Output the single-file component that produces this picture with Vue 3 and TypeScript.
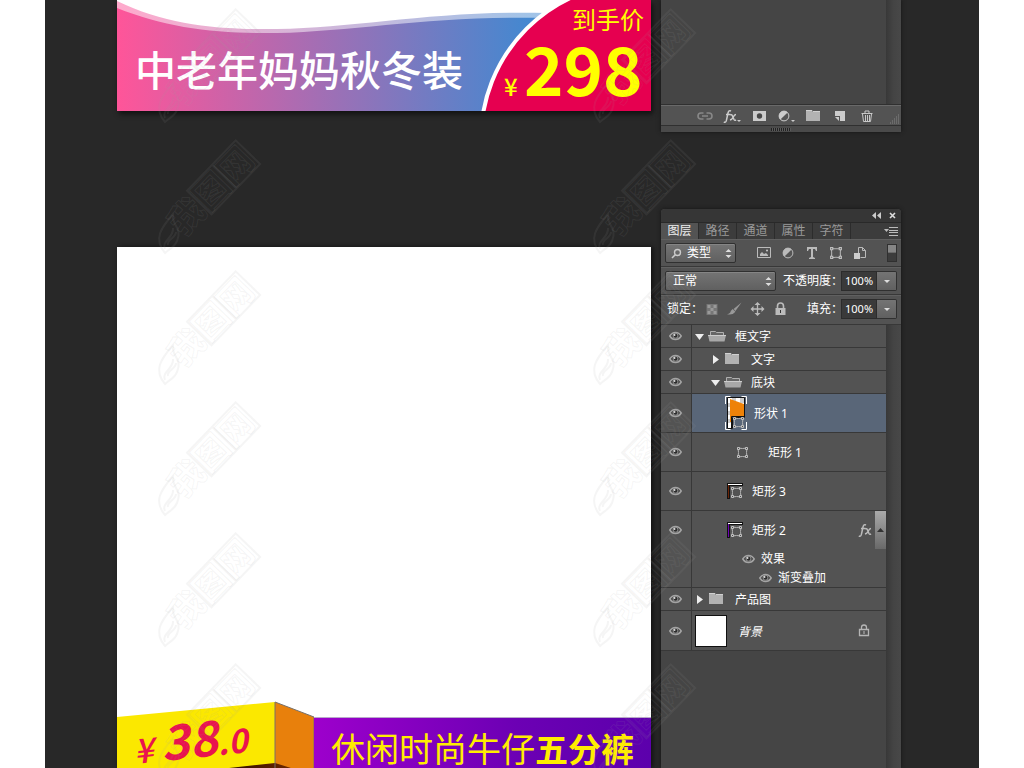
<script setup lang="ts">
import { ref } from 'vue'

type Kind = 'open' | 'closed' | 'shape' | 'rect' | 'thumb' | 'background'

interface Layer {
  id: number
  name: string
  kind: Kind
  level: number
  accent?: string
  effects?: string[]
}

const layers: Layer[] = [
  { id: 1, name: '框文字', kind: 'open', level: 1 },
  { id: 2, name: '文字', kind: 'closed', level: 2 },
  { id: 3, name: '底块', kind: 'open', level: 2 },
  { id: 4, name: '形状 1', kind: 'shape', level: 3 },
  { id: 5, name: '矩形 1', kind: 'rect', level: 3 },
  { id: 6, name: '矩形 3', kind: 'thumb', level: 3, accent: '#6b2407' },
  { id: 7, name: '矩形 2', kind: 'thumb', level: 3, accent: '#6d00b4', effects: ['渐变叠加'] },
  { id: 8, name: '产品图', kind: 'closed', level: 1 },
  { id: 9, name: '背景', kind: 'background', level: 1 },
]

const tabs = ['图层', '路径', '通道', '属性', '字符']
const activeTab = ref('图层')
const selected = ref(4)
const filterKind = ref('类型')
const blendMode = ref('正常')
const opacity = ref('100%')
const fill = ref('100%')

const footerTools = [
  { icon: 'link', label: '链接图层' },
  { icon: 'fx', label: '图层样式' },
  { icon: 'mask', label: '添加蒙版' },
  { icon: 'adjust-menu', label: '调整图层' },
  { icon: 'folder', label: '新建组' },
  { icon: 'new', label: '新建图层' },
  { icon: 'trash', label: '删除图层' },
]
const filterTools = [
  { icon: 'image', label: '像素图层' },
  { icon: 'adjust', label: '调整图层' },
  { icon: 'type', label: '文字图层' },
  { icon: 'path', label: '形状图层' },
  { icon: 'smart', label: '智能对象' },
]
const lockTools = [
  { icon: 'checker', label: '锁定透明像素' },
  { icon: 'brush', label: '锁定图像像素' },
  { icon: 'move', label: '锁定位置' },
  { icon: 'lock', label: '锁定全部' },
]
const marks = [0, 1, 2, 3, 4, 5, 6, 7, 8, 9, 10, 11]
</script>

<template>
  <div class="page">
    <svg class="defs" width="0" height="0" aria-hidden="true">
      <symbol id="eye" viewBox="0 0 13 10">
        <path d="M.8 5C2.500 2.200 4.300 1.500 6.500 1.500s4 .7 5.700 3.500C10.500 7.800 8.500 8.500 6.500 8.500S2.500 7.800 .8 5Z" fill="#444" stroke="#a4a4a4" stroke-width="1.500" />
        <circle cx="6.500" cy="4.800" r="2.800" fill="#999" /><circle cx="6.500" cy="4.800" r="2" fill="#2c2c2c" /><circle cx="5.500" cy="4" r="1" fill="#ddd" />
      </symbol>
      <symbol id="folder" viewBox="0 0 16 14"><path d="M1 2h6l1 1h7v9H1Z" fill="#b2b2b2" /><path d="M1 1.500h6l1 1h7" fill="none" stroke="#d0d0d0" /></symbol>
      <symbol id="folder-open" viewBox="0 0 18 14"><path d="M2.500 6V2.500h5l1 1h7V6" fill="#666" stroke="#b0b0b0" /><path d="M0 6h18l-1.500 6.500H1.500Z" fill="#a8a8a8" /><path d="M0 6.500h18" stroke="#ccc" /></symbol>
      <symbol id="path" viewBox="0 0 13 13">
        <path d="M2 2q4.500 1 9 0q-1 4.500 0 9q-4.500-1-9 0q1-4.500 0-9Z" fill="none" stroke="#b5b5b5" />
        <path d="M1.500 1.500h2v2h-2ZM9.500 1.500h2v2h-2ZM1.500 9.500h2v2h-2ZM9.500 9.500h2v2h-2Z" fill="#505050" stroke="#c0c0c0" />
      </symbol>
      <symbol id="image" viewBox="0 0 14 14"><path d="M.5 1.500h13v10H.5Z" fill="none" stroke="#bbb" /><path d="M3 10V8l2-2 2 2 2-1 2 2v1Z" fill="#bbb" /><circle cx="10" cy="4.500" r="1" fill="#ccc" /></symbol>
      <symbol id="adjust" viewBox="0 0 14 14"><circle cx="7" cy="7" r="4.900" fill="#555" stroke="#bbb" /><path d="M10.600 3.400A5 5 0 1 0 3.400 10.600Z" fill="#bbb" /></symbol>
      <symbol id="adjust-menu" viewBox="0 0 18 14"><circle cx="7" cy="7" r="4.900" fill="#555" stroke="#ccc" /><path d="M10.600 3.400A5 5 0 1 0 3.400 10.600Z" fill="#ccc" /><path d="M14 11h4l-2 2Z" fill="#ccc" /></symbol>
      <symbol id="type" viewBox="0 0 14 14"><path d="M2 1h10v4h-1l-1-2H8v8l2 1v1H4v-1l2-1V3H4L3 5H2Z" fill="#bbb" /></symbol>
      <symbol id="smart" viewBox="0 0 14 14"><path d="M5.500 7V1.500h4l3 3v7h-5M9.500 1.500v3h3" fill="none" stroke="#bbb" /><path d="M1 7h6v6H1Z" fill="#ccc" /></symbol>
      <symbol id="checker" viewBox="0 0 14 14"><path d="M2 2h11v11H2Z" fill="#777" /><path d="M3 3h3v3H3ZM9 3h3v3H9ZM6 6h3v3H6ZM3 9h3v3H3ZM9 9h3v3H9Z" fill="#999" /></symbol>
      <symbol id="brush" viewBox="0 0 16 14"><path d="M15.500 0 7 7l2 2ZM6 7 9 10Q6 14 0 12.500 4 11.500 4 9Z" fill="#999" /></symbol>
      <symbol id="move" viewBox="0 0 14 14"><path d="M7 2v10M2 7h10" stroke="#bbb" stroke-width="1.300" /><path d="m7 0 3 3H4ZM7 14l3-3H4ZM0 7l3-3v6ZM14 7l-3-3v6Z" fill="#bbb" /></symbol>
      <symbol id="lock" viewBox="0 0 14 14"><path d="M4 6V4a3 3 0 0 1 6 0v2" fill="none" stroke="#bbb" stroke-width="1.600" /><path d="M2 6h10v7H2Z" fill="#bbb" /><path d="M6.500 8h1v3h-1Z" fill="#333" /></symbol>
      <symbol id="lock-line" viewBox="0 0 12 13"><path d="M3.500 5V3.500a2.500 2.500 0 0 1 5 0V5M1.500 5.500h9v6h-9Z" fill="none" stroke="#b5b5b5" stroke-width="1.300" /><path d="M5.500 7h1v3h-1Z" fill="#bbb" /></symbol>
      <symbol id="link" viewBox="0 0 16 14"><path d="M6.500 4H4a3 3 0 0 0 0 6h2.500M9.500 4H12a3 3 0 0 1 0 6H9.500M5 7h6" fill="none" stroke="#888" stroke-width="1.600" /></symbol>
      <symbol id="fx" viewBox="0 0 18 14"><path d="M8 2Q5.800.8 5 4L3.500 11Q3 14 .8 13M3 5.500h4.500M7.500 6q1.500-.8 2 1L11 10.500q.6 1.300 2 .3M13 5.500Q11.500 5.500 10.300 8T7 11" fill="none" stroke="#ccc" stroke-width="1.500" /><path d="M14 11h4l-2 2Z" fill="#ccc" /></symbol>
      <symbol id="fx-only" viewBox="0 0 14 14"><path d="M8 2Q5.800.8 5 4L3.500 11Q3 14 .8 13M3 5.500h4.500M7.500 6q1.500-.8 2 1L11 10.500q.6 1.300 2 .3M13 5.500Q11.500 5.500 10.300 8T7 11" fill="none" stroke="#bbb" stroke-width="1.500" /></symbol>
      <symbol id="mask" viewBox="0 0 14 14"><path d="M1 2h13v10H1Z" fill="#ccc" /><circle cx="7.500" cy="7" r="2.700" fill="#484848" /></symbol>
      <symbol id="new" viewBox="0 0 14 14"><path d="M2 2h10v10H7V7H2Z" fill="#ccc" /><path d="M2 8h4v4Z" fill="#ccc" /></symbol>
      <symbol id="trash" viewBox="0 0 14 14"><path d="M1.500 4.500h11M5 4V2h4v2M2.500 5l1 7.500h7l1-7.500M5.500 6v6M7.500 6v6M9.500 6v6" fill="none" stroke="#c8c8c8" /></symbol>
      <symbol id="updown" viewBox="0 0 7 11"><path d="m3.500 1 3 3h-6ZM3.500 10l3-3h-6Z" fill="#ddd" /></symbol>
    </svg>

    <main class="workspace">
      <section class="boards">
        <svg class="banner" viewBox="0 0 534 111" role="img" aria-label="中老年妈妈秋冬装 到手价 ¥298">
          <defs>
            <linearGradient id="pinkblue"><stop offset="0" stop-color="#ff5599" /><stop offset=".77" stop-color="#4488d0" /></linearGradient>
          </defs>
          <path d="M0 0H534V111H0Z" fill="#fff" />
          <path d="M0 1C50 25 100 30 160 29C240 28 320 10 430 13H534V111H0Z" fill="url(#pinkblue)" opacity=".5" />
          <path d="M0 8C50 28 100 34 160 33C240 31 320 15 430 18H534V111H0Z" fill="url(#pinkblue)" />
          <circle cx="520" cy="139" r="156" fill="#e60050" stroke="#fff" stroke-width="4" />
          <text x="18" y="86" font-size="41" font-weight="500" fill="#fff">中老年妈妈秋冬装</text>
          <g fill="#ffff00">
            <text x="455" y="29" font-size="24">到手价</text>
            <text x="387" y="96" font-size="24" font-weight="500">¥</text>
            <text x="407" y="96" font-size="67" font-weight="700">298</text>
          </g>
        </svg>
        <div class="canvas">
          <svg class="strip" viewBox="0 0 534 71" role="img" aria-label="¥38.0 休闲时尚牛仔五分裤">
            <defs>
              <linearGradient id="violet"><stop offset="0" stop-color="#9d00cc" /><stop offset=".6" stop-color="#6c00b4" /><stop offset="1" stop-color="#5c00ac" /></linearGradient>
              <linearGradient id="brown"><stop offset="0" stop-color="#260800" /><stop offset="1" stop-color="#702800" /></linearGradient>
            </defs>
            <path d="M105 71 158 65 176 71Z" fill="url(#brown)" />
            <path d="M0 20 158 5V66L112 71H0Z" fill="#fbe800" />
            <path d="M158 5 197 20V71H174L158 66Z" fill="#e8800c" />
            <path d="M158 71V5l39 15v51" fill="none" stroke="#77706a" />
            <path d="M197 21H534V71H197Z" fill="url(#violet)" />
            <path d="M197 20.500H534" stroke="#b9a9ca" />
            <g fill="#e9134e" font-weight="700" font-style="italic" transform="translate(18 67) rotate(-6)">
              <text x="0" y="0" font-size="34" font-weight="500">¥</text>
              <text x="28" y="0" font-size="48">38</text>
              <text x="84" y="0" font-size="33">.0</text>
            </g>
            <text x="214" y="65" font-size="34" fill="#ffed00">休闲时尚牛仔<tspan font-size="33" font-weight="700">五分裤</tspan></text>
          </svg>
        </div>
      </section>

      <aside class="panels">
        <section class="panel upper">
          <div class="upper-body"><div class="gutter"></div></div>
          <div class="footer">
            <button v-for="t in footerTools" :key="t.icon" type="button" class="tool" :aria-label="t.label">
              <svg class="wide"><use :href="'#' + t.icon" /></svg>
            </button>
            <svg class="resize" viewBox="0 0 12 12"><path d="M9 2h2M7 4h4M5 6h6M3 8h8M1 10h10" stroke="#858585" stroke-dasharray="1 1" /></svg>
          </div>
          <div class="grip"><span></span></div>
        </section>

        <section class="panel layers-panel">
          <header class="titlebar">
            <button type="button" class="mini" aria-label="折叠"><svg viewBox="0 0 9 7"><path d="M4 0v7L0 3.500ZM9 0v7L5 3.500Z" fill="#ccc" /></svg></button>
            <button type="button" class="mini" aria-label="关闭"><svg viewBox="0 0 9 7"><path d="m2 1 5 5M7 1 2 6" stroke="#ddd" stroke-width="1.600" /></svg></button>
          </header>
          <nav class="tabs">
            <button v-for="t in tabs" :key="t" type="button" :class="{ active: activeTab === t }" @click="activeTab = t">{{ t }}</button>
            <button type="button" class="menu" aria-label="面板菜单"><svg viewBox="0 0 14 9"><path d="M0 2h5L2.500 5Z" fill="#bbb" /><path d="M5 .5h9M5 3.500h9M5 5.500h9M5 8.500h9" stroke="#bbb" /></svg></button>
          </nav>

          <div class="bar filter">
            <label class="picker kind">
              <svg class="search" viewBox="0 0 11 11"><circle cx="6.500" cy="4.500" r="3" fill="none" stroke="#ccc" stroke-width="1.400" /><path d="m4 7-3 3" stroke="#ccc" stroke-width="1.600" /></svg>
              <select v-model="filterKind" aria-label="筛选"><option>类型</option><option>名称</option></select>
              <svg class="updown"><use href="#updown" /></svg>
            </label>
            <div class="icons">
              <button v-for="t in filterTools" :key="t.icon" type="button" class="tool" :aria-label="t.label"><svg><use :href="'#' + t.icon" /></svg></button>
            </div>
            <button type="button" class="switch" aria-label="打开或关闭筛选"></button>
          </div>

          <div class="bar">
            <label class="picker blend">
              <select v-model="blendMode" aria-label="混合模式"><option>正常</option><option>正片叠底</option></select>
              <svg class="updown"><use href="#updown" /></svg>
            </label>
            <div class="amount">
              <label for="opacity">不透明度：</label>
              <input id="opacity" v-model="opacity" type="text" /><button type="button" aria-label="调整不透明度"></button>
            </div>
          </div>

          <div class="bar last">
            <span>锁定：</span>
            <div class="icons locks">
              <button v-for="t in lockTools" :key="t.icon" type="button" class="tool" :aria-label="t.label"><svg><use :href="'#' + t.icon" /></svg></button>
            </div>
            <div class="amount">
              <label for="fill">填充：</label>
              <input id="fill" v-model="fill" type="text" /><button type="button" aria-label="调整填充"></button>
            </div>
          </div>

          <div class="list-area">
            <ul class="layers">
              <li v-for="l in layers" :key="l.id" :class="[l.kind, 'level' + l.level, { selected: selected === l.id, expanded: l.effects }]" @click="selected = l.id">
                <button type="button" class="eye" aria-label="切换可见性"><svg><use href="#eye" /></svg></button>
                <div class="detail">
                  <div class="line">
                    <template v-if="l.kind === 'open' || l.kind === 'closed'">
                      <button type="button" class="twist" aria-label="展开或折叠">
                        <svg viewBox="0 0 9 9"><path :d="l.kind === 'open' ? 'M0 2h9L4.500 8Z' : 'M2 0v9l6-4.500Z'" fill="#eee" /></svg>
                      </button>
                      <svg class="folder" :class="l.kind"><use :href="l.kind === 'open' ? '#folder-open' : '#folder'" /></svg>
                    </template>
                    <svg v-else-if="l.kind === 'shape'" class="shape-thumb" viewBox="0 0 24 36">
                      <path d="M3.500 2.500h17v20h-12v11h-5Z" fill="#fff" stroke="#111" />
                      <path d="M8 3h4v3H8ZM16 3h4v5h-4ZM4 8h3v4H4ZM4 16h3v4H4ZM4 24h3v4H4Z" fill="#ccc" />
                      <path d="M6 4 20 9v13H8v5H6Z" fill="#ee8208" />
                      <path d="M7.500 33V21.500H21" fill="none" stroke="#111" />
                      <path d="M1.500 9V1.500h5M17.500 1.500h5V9M1.500 27v7.500h5M17.500 34.500h5V27" fill="none" stroke="#fff" />
                      <use href="#path" x="8" y="21" width="13" height="13" />
                    </svg>
                    <svg v-else-if="l.kind === 'rect'" class="rect-icon"><use href="#path" /></svg>
                    <svg v-else-if="l.kind === 'thumb'" class="rect-thumb" viewBox="0 0 17 17">
                      <path d="M0 0h16v3H3v13H0Z" fill="#111" /><path d="M1 1.500h14" stroke="#fff" /><path d="M1.500 2v13" :stroke="l.accent" />
                      <use href="#path" x="3" y="3" width="13" height="13" />
                    </svg>
                    <span v-else class="page-thumb"></span>
                    <span class="name">{{ l.name }}</span>
                    <svg v-if="l.effects" class="fx"><use href="#fx-only" /></svg>
                    <svg v-if="l.kind === 'background'" class="locked"><use href="#lock-line" /></svg>
                    <button v-if="l.effects" type="button" class="collapse" aria-label="折叠效果"><svg viewBox="0 0 7 4"><path d="M0 4h7L3.500 0Z" fill="#333" /></svg></button>
                  </div>
                  <template v-if="l.effects">
                    <div class="effect"><svg><use href="#eye" /></svg>效果</div>
                    <div v-for="e in l.effects" :key="e" class="effect sub"><svg><use href="#eye" /></svg>{{ e }}</div>
                  </template>
                </div>
              </li>
            </ul>
            <div class="gutter"></div>
          </div>
        </section>
      </aside>
    </main>

    <div class="watermarks" aria-hidden="true">
      <svg v-for="m in marks" :key="m" viewBox="0 0 110 131">
        <path d="M14 122C2 108 10 97 22 83C20 95 32 96 26 110C23 117 18 118 14 122ZM14 118C10 110 23 107 22 97M17 114C15 109 25 107 25 101" />
        <g transform="translate(34 105) rotate(-46)"><path d="M34 -30H104V4H34ZM70 -30V4" /><text x="-2" y="0">我图网</text></g>
      </svg>
    </div>
  </div>
</template>

<style>
body { margin: 0; background: #fff; }
</style>

<style scoped>
* { box-sizing: border-box; }
.page {
  position: relative;
  min-height: 100vh;
  display: flex;
  padding: 0 45px;
  overflow: hidden;
  background: #fff;
  color: #fff;
  font: 12px/16px "Noto Sans", "Noto Sans CJK SC", sans-serif;
}
.defs { position: absolute; }
.workspace { flex: 1; min-width: 0; display: flex; gap: 10px; padding: 0 78px 0 72px; background: #282828; }
.boards { flex: 1; min-width: 0; display: flex; flex-direction: column; gap: 136px; font-family: "Noto Sans CJK SC", sans-serif; }
.banner, .strip { display: block; width: 100%; }
.banner { box-shadow: 2px 3px 5px #111; }
.canvas { flex: 1; display: flex; align-items: flex-end; background: #fff; box-shadow: 2px 0 5px #111; }
.panels { width: 240px; display: flex; flex-direction: column; gap: 77px; }
button, input, select { margin: 0; padding: 0; border: 0; background: none; color: inherit; font: inherit; }
button { display: flex; align-items: center; justify-content: center; }
.panel { background: #535353; box-shadow: 0 0 4px #151515; }
.upper-body { height: 105px; display: flex; justify-content: flex-end; background: #454545; border-bottom: 1px solid #303030; }
.gutter { width: 15px; background: linear-gradient(90deg, #383838, #444 50%, #484848); }
.footer { height: 20px; display: flex; align-items: center; padding-left: 30px; border-top: 1px solid #696969; }
.footer .tool { width: 27px; height: 18px; }
.tool svg { width: 14px; height: 14px; }
.tool svg.wide { width: 18px; }
.resize { width: 12px; height: 12px; margin-left: auto; align-self: flex-end; }
.grip { height: 7px; display: flex; justify-content: center; align-items: center; border-top: 1px solid #303030; background: #4a4a4a; }
.grip span { width: 20px; height: 3px; background: repeating-linear-gradient(90deg, #222 0 1px, #5a5a5a 1px 2px); }
.layers-panel { flex: 1; display: flex; flex-direction: column; border-radius: 4px 4px 0 0; }
.titlebar { height: 13px; display: flex; justify-content: flex-end; align-items: center; gap: 7px; padding-right: 4px; background: #363636; border-radius: 4px 4px 0 0; }
.mini svg { display: block; width: 9px; height: 7px; }
.tabs { height: 17px; display: flex; background: #3c3c3c; border-top: 1px solid #292929; }
.tabs button { width: 38px; border-right: 1px solid #2c2c2c; color: #999; }
.tabs button.active { background: #535353; color: #eee; }
.tabs button.menu { width: 20px; margin-left: auto; border: 0; }
.menu svg { width: 14px; height: 9px; }
.bar { height: 28px; display: flex; align-items: center; justify-content: space-between; padding: 0 4px; border-bottom: 1px solid #383838; border-top: 1px solid #606060; }
.bar.last { height: 30px; padding: 0 4px 2px 6px; }
.picker { position: relative; display: flex; align-items: center; height: 20px; border: 1px solid #303030; border-radius: 2px; background: linear-gradient(#747474, #606060); box-shadow: inset 0 1px #858585; }
.kind { width: 71px; padding-left: 5px; gap: 5px; }
.blend { width: 111px; padding-left: 7px; }
.search { width: 11px; height: 11px; }
select { flex: 1; min-width: 0; appearance: none; outline: 0; }
option { color: #111; }
.updown { width: 7px; height: 11px; margin-right: 3px; pointer-events: none; }
.icons { display: flex; gap: 10px; }
.locks { gap: 8px; margin-right: auto; padding-left: 1px; }
.locks .tool svg { width: 15px; }
.switch { width: 10px; height: 18px; border: 1px solid #303030; background: linear-gradient(#858585 0 45%, #3c3c3c 50%); }
.amount { display: flex; align-items: center; }
.amount label { width: 58px; }
.last .amount label { width: 34px; }
.amount label, .last > span { white-space: nowrap; }
.amount input { width: 36px; height: 20px; padding-left: 3px; padding-bottom: 1px; border: 1px solid #2c2c2c; background: #3a3a3a; font-size: 11px; }
.amount button { width: 20px; height: 20px; border: 1px solid #303030; border-left: 0; border-radius: 0 2px 2px 0; background: linear-gradient(#747474, #606060); }
.amount button::after { content: ""; border: 3px solid transparent; border-top-color: #ddd; border-bottom: 0; }
.list-area { flex: 1; display: flex; background: #454545; }
.layers { flex: 1; margin: 0; padding: 0; list-style: none; }
.layers li { display: flex; height: 39px; border-bottom: 1px solid #383838; background: #535353; }
.layers li.open, .layers li.closed { height: 23px; }
.layers li.expanded { height: 77px; }
.layers li.background { height: 40px; }
.eye { width: 31px; padding-right: 1px; border-right: 1px solid #383838; }
.expanded .eye { align-items: flex-start; padding-top: 14px; }
.eye svg, .effect svg { width: 13px; height: 10px; }
.detail { flex: 1; min-width: 0; }
.selected .detail { background: #596678; }
.line { height: 100%; display: flex; align-items: center; padding-left: 3px; }
.expanded .line { height: 38px; }
.name { padding-top: 2px; }
.twist { width: 9px; height: 9px; margin-right: 4px; }
.twist svg { width: 9px; height: 9px; }
.folder { width: 18px; height: 14px; margin-right: 9px; }
.folder.closed { width: 16px; margin-right: 11px; }
.level2 .line { padding-left: 19px; }
.shape .line { padding-left: 32px; }
.rect .line { padding-left: 44px; }
.thumb .line { padding-left: 35px; }
.shape-thumb { width: 24px; height: 36px; margin-right: 6px; }
.rect-icon { width: 13px; height: 13px; margin-right: 19px; }
.rect-thumb { width: 17px; height: 17px; margin-right: 8px; }
.page-thumb { width: 32px; height: 32px; margin-right: 11px; border: 1px solid #111; background: #fff; }
.background .name { font-style: italic; }
.fx { width: 14px; height: 14px; margin-left: auto; margin-right: 3px; }
.locked { width: 12px; height: 13px; margin-left: auto; margin-right: 16px; }
.collapse { width: 11px; height: 38px; background: linear-gradient(#aaa, #696969); }
.collapse svg { width: 7px; height: 4px; }
.effect { height: 19px; display: flex; align-items: center; gap: 6px; padding: 1px 0 0 50px; }
.effect.sub { padding-left: 67px; }
.watermarks { position: absolute; top: 0; left: 151px; right: 328px; display: grid; grid-template-columns: 110px 110px; justify-content: space-between; pointer-events: none; }
.watermarks svg { display: block; width: 110px; height: 131px; overflow: visible; }
.watermarks path { fill: none; stroke: rgba(155, 155, 155, 0.1); stroke-width: 2; }
.watermarks text { font: 700 35px "Noto Sans CJK SC", sans-serif; fill: rgba(0, 0, 0, 0.02); stroke: rgba(165, 165, 165, 0.11); }
</style>
